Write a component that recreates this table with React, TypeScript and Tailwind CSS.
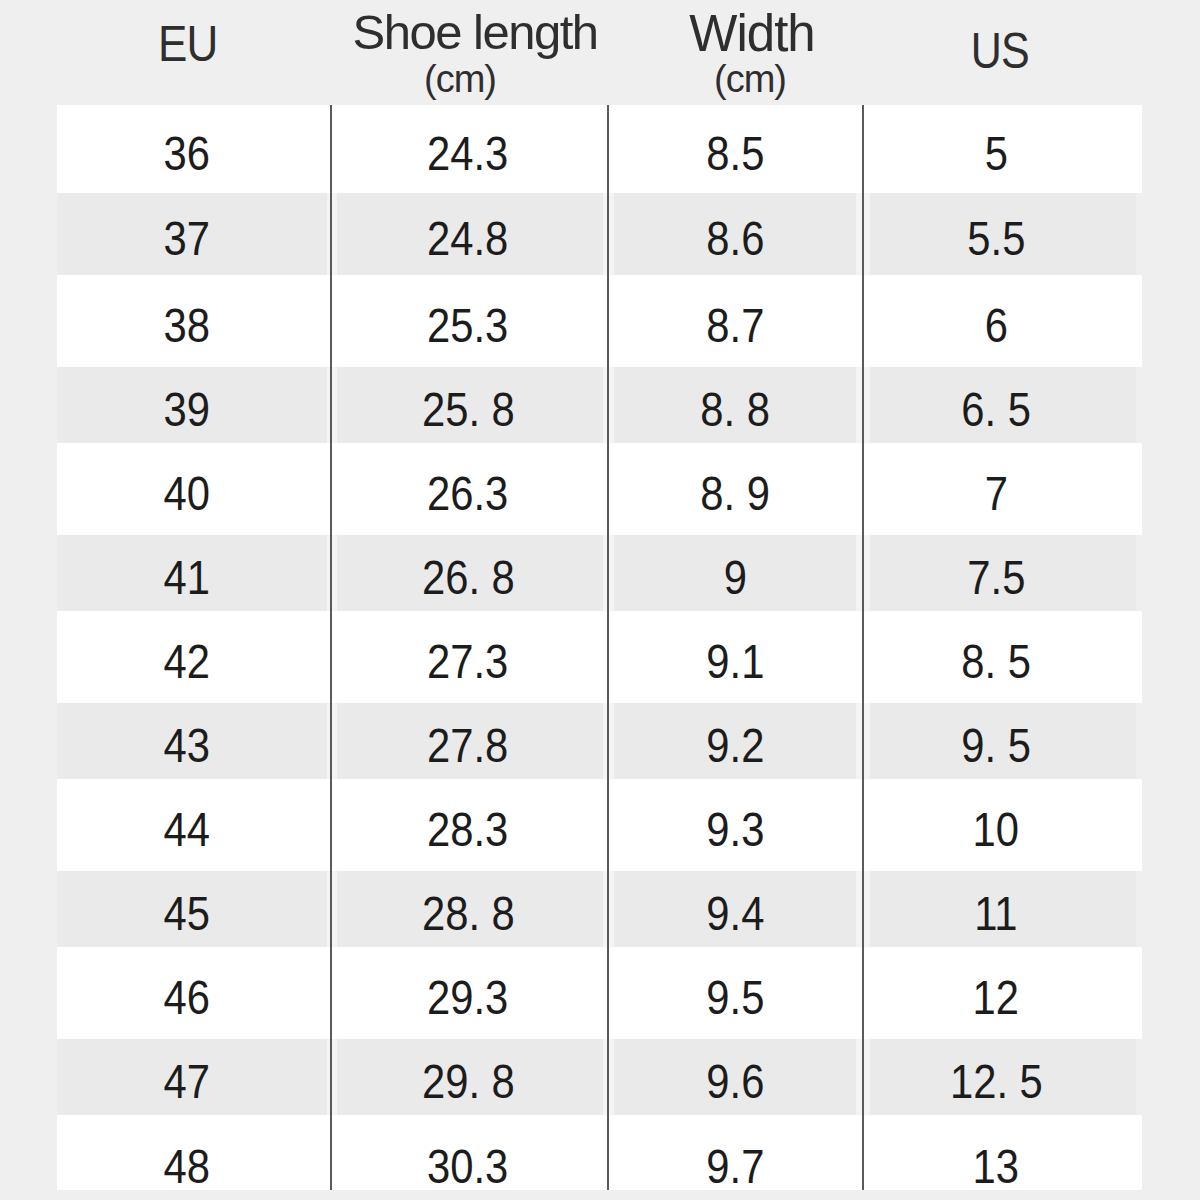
import React from 'react'

type Row = [string, string, string, string]

const rows: Row[] = [
  ['36', '24.3', '8.5', '5'],
  ['37', '24.8', '8.6', '5.5'],
  ['38', '25.3', '8.7', '6'],
  ['39', '25. 8', '8. 8', '6. 5'],
  ['40', '26.3', '8. 9', '7'],
  ['41', '26. 8', '9', '7.5'],
  ['42', '27.3', '9.1', '8. 5'],
  ['43', '27.8', '9.2', '9. 5'],
  ['44', '28.3', '9.3', '10'],
  ['45', '28. 8', '9.4', '11'],
  ['46', '29.3', '9.5', '12'],
  ['47', '29. 8', '9.6', '12. 5'],
  ['48', '30.3', '9.7', '13'],
]

// row heights follow the picture: white rows are a bit taller than grey ones
const heights = [
  'h-[88px]',
  'h-[82px]',
  'h-[92px]',
  'h-[76px]',
  'h-[92px]',
  'h-[76px]',
  'h-[92px]',
  'h-[76px]',
  'h-[92px]',
  'h-[76px]',
  'h-[92px]',
  'h-[76px]',
  'h-[75px]',
]

const Divider: React.FC<{ gap: string; offset: string; white: boolean }> = ({ gap, offset, white }) => (
  <div className={`${gap} ${white ? 'bg-white' : 'bg-[#f4f4f4]'} flex shrink-0 ${offset}`}>
    <div className="w-[2px] h-full bg-[#5a5a5a]" />
  </div>
)

const Cell: React.FC<{ width: string; white: boolean; pad: string; children: React.ReactNode }> = ({
  width,
  white,
  pad,
  children,
}) => (
  <div
    className={`${width} ${white ? 'bg-white' : 'bg-[#eaeaea]'} ${pad} shrink-0 flex items-center justify-center text-[48px] leading-none text-[#1c1c1c]`}
  >
    {children}
  </div>
)

const Num: React.FC<{ shift?: string; children: React.ReactNode }> = ({ shift = '', children }) => (
  <span className={`inline-block scale-x-[0.87] whitespace-pre ${shift}`}>{children}</span>
)

const SizeRow: React.FC<{ row: Row; index: number }> = ({ row, index }) => {
  const white = index % 2 === 0
  const last = index === rows.length - 1
  const pad = last ? 'pt-[28px]' : 'pt-[9px]'

  return (
    <div className={`flex ${heights[index]}`}>
      <Cell width="w-[270px]" white={white} pad={pad}>
        <Num shift="-translate-x-[5px]">{row[0]}</Num>
      </Cell>
      <Divider gap="w-[10px]" offset="pl-[3px]" white={white} />
      <Cell width="w-[266px]" white={white} pad={pad}>
        <Num shift="-translate-x-[2px]">{row[1]}</Num>
      </Cell>
      <Divider gap="w-[11px]" offset="pl-[4px]" white={white} />
      <Cell width="w-[242px]" white={white} pad={pad}>
        <Num>{row[2]}</Num>
      </Cell>
      <Divider gap="w-[14px]" offset="pl-[6px]" white={white} />
      <Cell width={white ? 'w-[272px]' : 'w-[266px]'} white={white} pad={pad}>
        <Num shift={white ? '-translate-x-[10px]' : '-translate-x-[7px]'}>{row[3]}</Num>
      </Cell>
    </div>
  )
}

const App: React.FC = () => {
  return (
    <div
      className="w-[1200px] h-[1200px] overflow-hidden bg-[#efefef] pl-[57px]"
      style={{ fontFamily: '"Liberation Sans", Arial, sans-serif' }}
    >
      <div className="flex h-[105px] text-[#2e2e2e] leading-none">
        <div className="w-[270px] shrink-0 flex flex-col items-center pt-[19px] pr-[8px]">
          <span className="inline-block text-[50px] tracking-[-1px] scale-x-[0.88]">EU</span>
        </div>
        <div className="w-[10px] shrink-0" />
        <div className="w-[266px] shrink-0 flex flex-col items-center pt-[8px]">
          <span className="text-[49px] tracking-[-1.5px] pl-[10px]">Shoe length</span>
          <span className="text-[38px] tracking-[-1px] mt-[3px] pr-[20px]">(cm)</span>
        </div>
        <div className="w-[11px] shrink-0" />
        <div className="w-[242px] shrink-0 flex flex-col items-center pt-[8px]">
          <span className="text-[51px] tracking-[-1px] pl-[34px]">Width</span>
          <span className="text-[38px] tracking-[-1px] mt-[1px] pl-[30px]">(cm)</span>
        </div>
        <div className="w-[14px] shrink-0" />
        <div className="w-[266px] shrink-0 flex flex-col items-center pt-[26px] pr-[6px]">
          <span className="inline-block text-[50px] tracking-[-1px] scale-x-[0.86]">US</span>
        </div>
      </div>

      {rows.map((row, i) => (
        <SizeRow key={row[0]} row={row} index={i} />
      ))}
    </div>
  )
}

export default App
